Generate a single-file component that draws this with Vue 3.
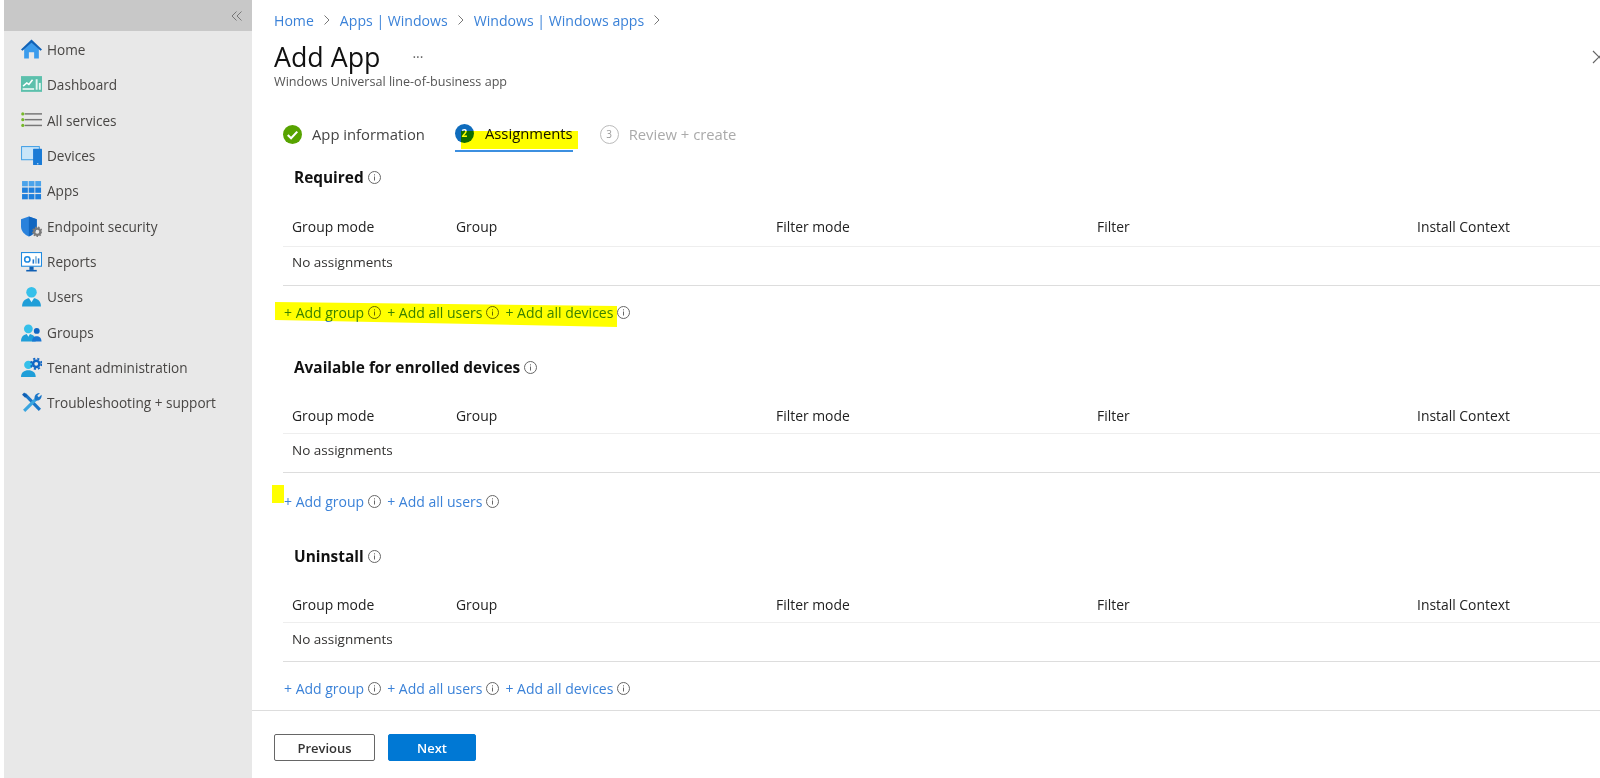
<script setup>
const navItems = [
  { label: 'Home', icon: 'home' },
  { label: 'Dashboard', icon: 'dashboard' },
  { label: 'All services', icon: 'services' },
  { label: 'Devices', icon: 'devices' },
  { label: 'Apps', icon: 'apps' },
  { label: 'Endpoint security', icon: 'security' },
  { label: 'Reports', icon: 'reports' },
  { label: 'Users', icon: 'users' },
  { label: 'Groups', icon: 'groups' },
  { label: 'Tenant administration', icon: 'tenant' },
  { label: 'Troubleshooting + support', icon: 'tools' }
]

const crumbs = ['Home', 'Apps | Windows', 'Windows | Windows apps']
const columns = ['Group mode', 'Group', 'Filter mode', 'Filter', 'Install Context']

const sections = [
  { title: 'Required', links: ['Add group', 'Add all users', 'Add all devices'], mark: 'wide', cls: 'sec-required' },
  { title: 'Available for enrolled devices', links: ['Add group', 'Add all users'], mark: 'small', cls: 'sec-available' },
  { title: 'Uninstall', links: ['Add group', 'Add all users', 'Add all devices'], mark: '', cls: 'sec-uninstall' }
]
</script>

<template>
  <div class="page">
    <aside class="sidebar">
      <div class="collapse">
        <svg width="12" height="12" viewBox="0 0 12 12" fill="none" stroke="#777" stroke-width="1">
          <path d="M5.5 1.5 1 6l4.500 4.500M10.5 1.500 6 6l4.500 4.500" />
        </svg>
      </div>
      <nav class="nav">
        <div v-for="item in navItems" :key="item.label" class="nav-item">
          <svg class="nav-icon" width="21" height="21" viewBox="0 0 20 20">
            <template v-if="item.icon === 'home'">
              <path d="M3 9.500 10 3l7 6.500v9h-4.500v-6h-5v6H3z" fill="#3c9cec" />
              <path d="M0 10 10 .5 20 10l-1.400 1.200L10 3.500 1.400 11.200z" fill="#0f62b8" />
            </template>
            <template v-else-if="item.icon === 'dashboard'">
              <rect y="2" width="20" height="15" fill="#5cc0ac" />
              <rect x="1.500" y="13.500" width="11" height="1.600" fill="#e6f6f2" />
              <path d="M2 11.500 5.500 8.500l2 1.500 3.500-4.500" fill="none" stroke="#fff" stroke-width="1.500" />
              <rect x="14" y="5" width="1.800" height="10" fill="#e6f6f2" />
              <rect x="17" y="8.500" width="1.800" height="6.500" fill="#e6f6f2" />
            </template>
            <template v-else-if="item.icon === 'services'">
              <rect x="3.500" y="3" width="16.500" height="1.400" fill="#777" />
              <rect x="3.500" y="8.500" width="16.500" height="1.400" fill="#777" />
              <rect x="3.500" y="14" width="16.500" height="1.400" fill="#777" />
              <circle cx="1.700" cy="3.700" r="1.500" fill="#76b82a" />
              <circle cx="1.700" cy="9.200" r="1.500" fill="#76b82a" />
              <circle cx="1.700" cy="14.700" r="1.500" fill="#76b82a" />
            </template>
            <template v-else-if="item.icon === 'devices'">
              <rect y="1" width="18" height="13.500" rx=".5" fill="#4aa3e6" />
              <rect x="1" y="2" width="16" height="11.500" fill="#c9e5f8" />
              <rect x="11.500" y="3.500" width="8.500" height="15.500" rx=".5" fill="#1a7bd6" />
              <rect x="15.200" y="17.400" width="1.400" height="1" fill="#cfe6f8" />
            </template>
            <template v-else-if="item.icon === 'apps'">
              <g fill="#1f7fdc">
                <rect x="1" y="1" width="5.500" height="5" fill="#4ba3ea" />
                <rect x="7.300" y="1" width="5.500" height="5" fill="#4ba3ea" />
                <rect x="13.600" y="1" width="5.500" height="5" fill="#4ba3ea" />
                <rect x="1" y="7.200" width="5.500" height="5" />
                <rect x="7.300" y="7.200" width="5.500" height="5" />
                <rect x="13.600" y="7.200" width="5.500" height="5" />
                <rect x="1" y="13.400" width="5.500" height="5" />
                <rect x="7.300" y="13.400" width="5.500" height="5" />
                <rect x="13.600" y="13.400" width="5.500" height="5" />
              </g>
            </template>
            <template v-else-if="item.icon === 'security'">
              <path d="M7.500.5 15 3v7c0 4.500-3.500 8-7.500 9.500C3.500 18 0 14.500 0 10V3z" fill="#2a82dc" />
              <path d="M7.500.5 15 3v7c0 4.500-3.500 8-7.500 9.500z" fill="#1166c0" />
              <circle cx="15.500" cy="15" r="3" fill="none" stroke="#7a7a7a" stroke-width="2.200" />
              <circle cx="15.500" cy="15" r="4.400" fill="none" stroke="#7a7a7a" stroke-width="1.200" stroke-dasharray="1.500 1.500" />
            </template>
            <template v-else-if="item.icon === 'reports'">
              <rect y="1" width="20" height="14" fill="#1f8ae0" />
              <rect x="1" y="2" width="18" height="12" fill="#fff" />
              <circle cx="6" cy="8" r="2.500" fill="none" stroke="#1f8ae0" stroke-width="1.500" />
              <rect x="11" y="8" width="1.500" height="4" fill="#1f76d0" />
              <rect x="13.500" y="5" width="1.500" height="7" fill="#7fb2d8" />
              <rect x="16" y="7" width="1.500" height="5" fill="#1f76d0" />
              <rect x="8" y="15" width="4" height="3" fill="#0f5fb4" />
              <rect x="5" y="18" width="10" height="1.500" fill="#0f5fb4" />
            </template>
            <template v-else-if="item.icon === 'users'">
              <circle cx="10" cy="6" r="5" fill="#35c0ea" />
              <path d="M1 19.500c0-5.500 3.500-8 9-8s9 2.500 9 8z" fill="#1f9ed8" />
              <path d="M7.500 11.500h5L10 15.500z" fill="#e8f6fb" />
            </template>
            <template v-else-if="item.icon === 'groups'">
              <circle cx="7" cy="6.500" r="4.200" fill="#35c0ea" />
              <path d="M0 18.500c0-5 3-7 7-7s7 2 7 7z" fill="#1f9ed8" />
              <path d="M5.500 11.500h3L7 14z" fill="#e8f6fb" />
              <circle cx="15" cy="8.500" r="2.800" fill="#1166c4" />
              <path d="M10.500 18.500c0-3.500 2-5 4.500-5s4.500 1.500 4.500 5z" fill="#1a76d2" />
            </template>
            <template v-else-if="item.icon === 'tenant'">
              <circle cx="7" cy="7.500" r="4" fill="#35c0ea" />
              <path d="M0 19c0-4.500 3-6.500 7-6.500s7 2 7 6.500z" fill="#1f9ed8" />
              <circle cx="14.500" cy="6.500" r="3" fill="none" stroke="#1166c4" stroke-width="2.400" />
              <circle cx="14.500" cy="6.500" r="5" fill="none" stroke="#1166c4" stroke-width="1.800" stroke-dasharray="2 2" />
            </template>
            <template v-else-if="item.icon === 'tools'">
              <path d="M3.500 2 18 17" stroke="#1a76c8" stroke-width="3" fill="none" />
              <path d="M1 2.500 3 .5l3 3-2 2z" fill="#0f5fb4" />
              <path d="M3 18 15 6" stroke="#3ba6e0" stroke-width="3" fill="none" />
              <path d="M13 6.500A4.500 4.500 0 0 1 18 1l-2.500 2.500L17 5l2.500-2.500A4.500 4.500 0 0 1 14 8z" fill="#1a76c8" />
            </template>
          </svg>
          <span class="nav-label">{{ item.label }}</span>
        </div>
      </nav>
    </aside>

    <main class="main">
      <div class="crumbs">
        <template v-for="crumb in crumbs" :key="crumb">
          <span class="crumb">{{ crumb }}</span>
          <svg class="crumb-sep" width="8" height="12" viewBox="0 0 8 12" fill="none" stroke="#777" stroke-width="1">
            <path d="M1.500 1.500 6 6l-4.500 4.500" />
          </svg>
        </template>
      </div>

      <div class="title-row">
        <h1 class="title">Add App</h1>
        <span class="more">···</span>
      </div>
      <div class="subtitle">Windows Universal line-of-business app</div>

      <div class="tabs">
        <div class="tab">
          <svg width="19" height="19" viewBox="0 0 20 20">
            <circle cx="10" cy="10" r="10" fill="#57a300" />
            <path d="M5 10.500 8.500 14 15 7" fill="none" stroke="#fff" stroke-width="2.200" />
          </svg>
          <span class="tab-label">App information</span>
        </div>
        <div class="tab tab-active">
          <span class="step step-active">2</span>
          <span class="tab-label">Assignments</span>
          <span class="mark mark-tab"></span>
        </div>
        <div class="tab tab-off">
          <span class="step step-off">3</span>
          <span class="tab-label">Review + create</span>
        </div>
      </div>

      <section v-for="section in sections" :key="section.title" class="section" :class="section.cls">
        <h2 class="section-title">
          {{ section.title }}
          <svg class="info" width="13" height="13" viewBox="0 0 13 13">
            <circle cx="6.500" cy="6.500" r="6" fill="none" stroke="#666" />
            <path d="M6.500 5.500v4M6.500 3.300v1.100" stroke="#666" fill="none" />
          </svg>
        </h2>
        <div class="table-head">
          <div v-for="col in columns" :key="col" class="cell">{{ col }}</div>
        </div>
        <div class="table-row">No assignments</div>
        <div class="links">
          <template v-for="link in section.links" :key="link">
            <span class="link">+ {{ link }}</span>
            <svg class="info link-info" width="13" height="13" viewBox="0 0 13 13">
              <circle cx="6.500" cy="6.500" r="6" fill="none" stroke="#666" />
              <path d="M6.500 5.500v4M6.500 3.300v1.100" stroke="#666" fill="none" />
            </svg>
          </template>
          <span v-if="section.mark === 'wide'" class="mark mark-wide"></span>
          <span v-if="section.mark === 'small'" class="mark mark-small"></span>
        </div>
      </section>

      <footer class="footer">
        <button class="btn btn-prev">Previous</button>
        <button class="btn btn-next">Next</button>
      </footer>

      <svg class="close" width="14" height="14" viewBox="0 0 14 14" fill="none" stroke="#666" stroke-width="1.200">
        <path d="M1 1l12 12M13 1 1 13" />
      </svg>
    </main>
  </div>
</template>

<style>
html, body { margin: 0; overflow: hidden; background: #fff; }
</style>

<style scoped>
.page {
  display: flex;
  width: 1600px;
  height: 778px;
  overflow: hidden;
  font-family: "Open Sans", "Liberation Sans", sans-serif;
  font-size: 13.5px;
  color: #323130;
  background: #fff;
  padding-left: 4px;
  box-sizing: border-box;
}
.sidebar {
  width: 248px;
  flex: none;
  background: #e8e8e8;
}
.collapse {
  height: 31px;
  background: #c8c8c8;
  display: flex;
  align-items: center;
  justify-content: flex-end;
  padding-right: 9px;
  box-sizing: border-box;
}
.nav { padding-top: 1px; }
.nav-item {
  height: 35.3px;
  display: flex;
  align-items: center;
  padding-left: 17px;
}
.nav-icon { flex: none; margin-right: 5px; }
.nav-label { color: #484644; font-size: 13.6px; }

.main {
  position: relative;
  flex: 1;
  min-width: 0;
  padding: 10px 0 0 22px;
}
.crumbs {
  height: 20px;
  display: flex;
  align-items: center;
  font-size: 14.1px;
}
.crumb { color: #3b82d8; }
.crumb-sep { margin: 0 9px; }
.title-row {
  display: flex;
  align-items: center;
  height: 34px;
  margin-top: 9px;
}
.title {
  margin: 0;
  font-size: 26.8px;
  font-weight: 500;
  color: #111;
}
.more { margin-left: 32px; color: #666; font-size: 14px; }
.subtitle { height: 18px; line-height: 18px; font-size: 12.6px; color: #555; }
.tabs {
  display: flex;
  height: 36px;
  margin-top: 25px;
  margin-left: 9px;
}
.tab {
  position: relative;
  display: flex;
  align-items: center;
  box-sizing: border-box;
  margin-right: 30px;
  gap: 10px;
}
.tab-label { font-size: 14.8px; color: #444; }
.tab-active {
  border-bottom: 2px solid #3c8fe0;
  gap: 11px;
}
.tab-active .tab-label { color: #111; }
.tab-off { margin-left: -3px; }
.tab-off .tab-label { color: #aaa; }
.step {
  width: 19px;
  height: 19px;
  border-radius: 50%;
  display: flex;
  align-items: center;
  justify-content: center;
  font-size: 10px;
  box-sizing: border-box;
}
.step-active { background: #0f6cbd; color: #fff; font-weight: 700; }
.step-off { border: 1px solid #bbb; color: #999; }

.mark {
  position: absolute;
  background: #ffff00;
  mix-blend-mode: multiply;
}
.mark-tab { left: 6px; width: 117px; top: 15px; height: 18px; }
.mark-wide {
  left: -9px;
  top: 0;
  width: 342px;
  height: 25px;
  clip-path: polygon(0 0, 100% 4px, 100% 100%, 0 72%);
}
.mark-small { left: -12px; top: -6px; width: 12px; height: 18px; }

.section-title {
  display: flex;
  align-items: center;
  gap: 4px;
  height: 20px;
  margin: 15px 0 0 20px;
  font-size: 15.4px;
  font-weight: 700;
  color: #111;
}
.section { padding-bottom: 20px; }
.table-head {
  display: grid;
  grid-template-columns: 164px 320px 321px 320px 1fr;
  align-items: center;
  height: 38px;
  margin-top: 20px;
  margin-left: 9px;
  padding-left: 9px;
  padding-top: 2px;
  border-bottom: 1px solid #eee;
  box-sizing: border-box;
}
.cell { color: #222; font-size: 13.9px; }
.table-row {
  height: 39px;
  margin-left: 9px;
  padding: 7px 0 0 9px;
  border-bottom: 1px solid #ddd;
  box-sizing: border-box;
}
.links {
  position: relative;
  display: flex;
  align-items: center;
  height: 20px;
  margin-top: 18px;
  margin-left: 10px;
  font-size: 14px;
}
.link { color: #3b82d8; }
.info { flex: none; }
.link-info { margin: 0 6px 0 4px; }

.sec-required .table-head { height: 40px; padding-bottom: 2px; }
.sec-required .table-row { padding-top: 6px; }
.sec-required .links { margin-top: 16px; }
.sec-available .table-head { margin-top: 19px; }
.sec-uninstall .table-head { margin-top: 19px; }
.sec-uninstall .table-row { padding-top: 7px; }
.sec-uninstall .links { margin-top: 16px; }
.sec-uninstall { padding-bottom: 12px; }

.footer {
  margin-left: -22px;
  padding: 23px 0 0 22px;
  border-top: 1px solid #ddd;
  display: flex;
  gap: 13px;
}
.btn {
  height: 27px;
  font-family: inherit;
  font-size: 13px;
  font-weight: 600;
  border-radius: 2px;
  padding: 0;
}
.btn-prev { width: 101px; background: #fff; border: 1px solid #666; color: #333; }
.btn-next { width: 88px; background: #0078d4; border: 1px solid #0078d4; color: #fff; }
.close { position: absolute; top: 50px; left: 1340px; }
</style>
